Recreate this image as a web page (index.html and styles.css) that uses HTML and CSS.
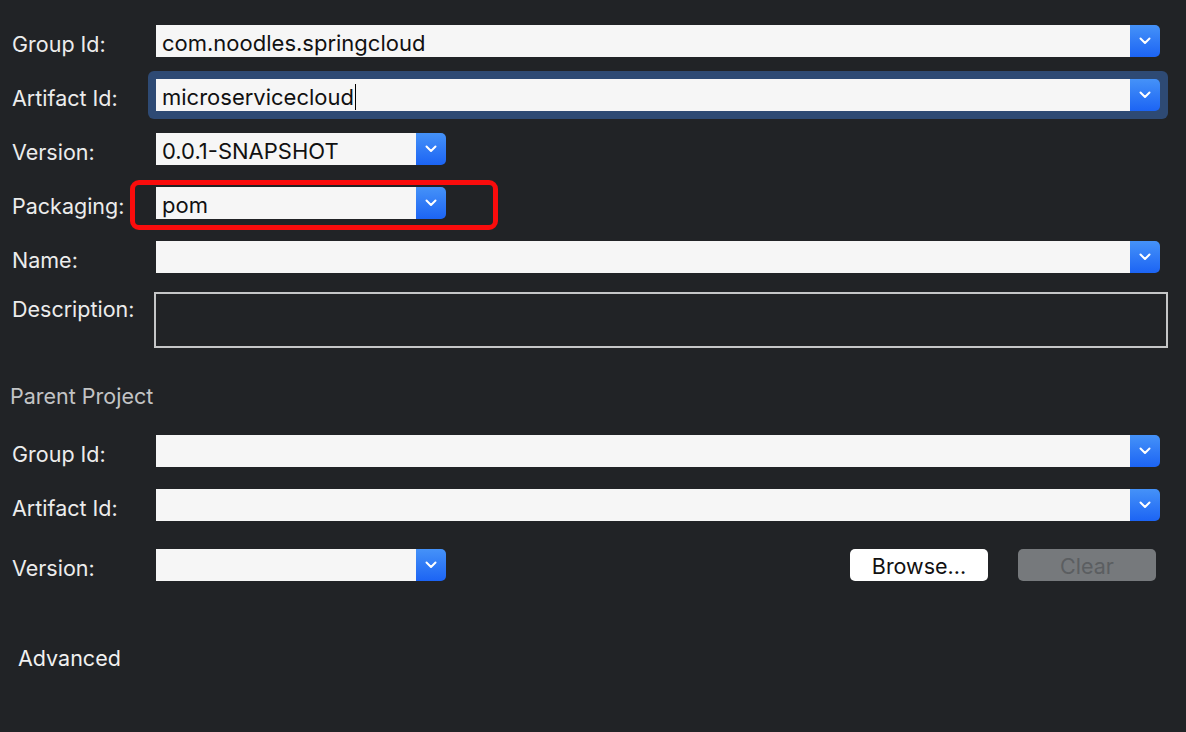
FILE: index.html
```html
<!DOCTYPE html>
<html>
<head>
<meta charset="utf-8">
<link rel="stylesheet" href="styles.css">
</head>
<body>
<div class="page">
  <div class="form">
    <div class="row">
      <label class="lbl">Group Id:</label>
      <div class="combo wide"><div class="field">com.noodles.springcloud</div><div class="arrow"><svg width="12" height="8" viewBox="0 0 12 8"><path d="M1.5 1.5 L6 6 L10.5 1.5" fill="none" stroke="#fff" stroke-width="2" stroke-linecap="round" stroke-linejoin="round"/></svg></div></div>
    </div>
    <div class="row">
      <label class="lbl">Artifact Id:</label>
      <div class="combo wide focused"><div class="field"><span class="caret">microservicecloud</span></div><div class="arrow"><svg width="12" height="8" viewBox="0 0 12 8"><path d="M1.5 1.5 L6 6 L10.5 1.5" fill="none" stroke="#fff" stroke-width="2" stroke-linecap="round" stroke-linejoin="round"/></svg></div></div>
    </div>
    <div class="row">
      <label class="lbl">Version:</label>
      <div class="combo short"><div class="field">0.0.1-SNAPSHOT</div><div class="arrow"><svg width="12" height="8" viewBox="0 0 12 8"><path d="M1.5 1.5 L6 6 L10.5 1.5" fill="none" stroke="#fff" stroke-width="2" stroke-linecap="round" stroke-linejoin="round"/></svg></div></div>
    </div>
    <div class="row marked">
      <label class="lbl">Packaging:</label>
      <div class="combo short"><div class="field">pom</div><div class="arrow"><svg width="12" height="8" viewBox="0 0 12 8"><path d="M1.5 1.5 L6 6 L10.5 1.5" fill="none" stroke="#fff" stroke-width="2" stroke-linecap="round" stroke-linejoin="round"/></svg></div></div>
      <div class="redbox"></div>
    </div>
    <div class="row">
      <label class="lbl">Name:</label>
      <div class="combo wide"><div class="field"></div><div class="arrow"><svg width="12" height="8" viewBox="0 0 12 8"><path d="M1.5 1.5 L6 6 L10.5 1.5" fill="none" stroke="#fff" stroke-width="2" stroke-linecap="round" stroke-linejoin="round"/></svg></div></div>
    </div>
    <div class="row desc-row">
      <label class="lbl desc-lbl">Description:</label>
      <div class="desc"></div>
    </div>
  </div>

  <div class="section-title">Parent Project</div>

  <div class="form parent">
    <div class="row">
      <label class="lbl">Group Id:</label>
      <div class="combo wide"><div class="field"></div><div class="arrow"><svg width="12" height="8" viewBox="0 0 12 8"><path d="M1.5 1.5 L6 6 L10.5 1.5" fill="none" stroke="#fff" stroke-width="2" stroke-linecap="round" stroke-linejoin="round"/></svg></div></div>
    </div>
    <div class="row">
      <label class="lbl">Artifact Id:</label>
      <div class="combo wide"><div class="field"></div><div class="arrow"><svg width="12" height="8" viewBox="0 0 12 8"><path d="M1.5 1.5 L6 6 L10.5 1.5" fill="none" stroke="#fff" stroke-width="2" stroke-linecap="round" stroke-linejoin="round"/></svg></div></div>
    </div>
    <div class="row last">
      <label class="lbl">Version:</label>
      <div class="combo short"><div class="field"></div><div class="arrow"><svg width="12" height="8" viewBox="0 0 12 8"><path d="M1.5 1.5 L6 6 L10.5 1.5" fill="none" stroke="#fff" stroke-width="2" stroke-linecap="round" stroke-linejoin="round"/></svg></div></div>
      <div class="buttons">
        <button class="btn browse">Browse...</button>
        <button class="btn clear" disabled>Clear</button>
      </div>
    </div>
  </div>

  <div class="advanced">Advanced</div>
</div>
</body>
</html>
```
FILE: styles.css
```css
* { box-sizing: border-box; }
html, body {
  margin: 0;
  padding: 0;
  background: #212326;
}
body {
  width: 1186px;
  height: 732px;
  overflow: hidden;
  font-family: "Inter", "Liberation Sans", sans-serif;
  color: #eeeeee;
}
.page {
  padding-top: 25px;
}
.form {
  display: flex;
  flex-direction: column;
  gap: 22px;
}
.row {
  display: flex;
  align-items: center;
  height: 32px;
  position: relative;
}
.lbl {
  width: 156px;
  padding-left: 12px;
  font-size: 21.5px;
  color: #ececec;
  padding-top: 5px;
  flex: none;
}
.combo {
  display: flex;
  height: 32px;
  position: relative;
  flex: none;
}
.combo.wide { width: 1004px; }
.combo.short { width: 290px; }
.combo.focused::before {
  content: "";
  position: absolute;
  left: -8px; right: -8px; top: -8px; bottom: -8px;
  background: #2e4a74;
  border-radius: 6px;
  z-index: 0;
}
.field {
  position: relative;
  z-index: 1;
  flex: 1;
  background: #f6f6f6;
  color: #111;
  font-size: 22px;
  padding-left: 6px;
  padding-top: 5px;
  line-height: 27px;
  white-space: nowrap;
  overflow: hidden;
}
.caret {
  border-right: 1.5px solid #000;
  padding-right: 1px;
}
.arrow {
  position: relative;
  z-index: 1;
  width: 30px;
  flex: none;
  background: linear-gradient(#4592f8, #1c64f4);
  border-radius: 0 5px 5px 0;
  display: flex;
  align-items: center;
  justify-content: center;
}
.redbox {
  position: absolute;
  left: 130px;
  top: -7px;
  width: 368px;
  height: 50px;
  border: 5px solid #fa0c0c;
  border-radius: 9px;
}
.desc-row {
  height: 56px;
  align-items: flex-start;
  margin-top: -3px;
}
.desc-lbl { padding-top: 4px; }
.desc {
  margin-left: -2px;
  width: 1014px;
  height: 56px;
  border: 2px solid #c5c6c7;
}
.section-title {
  margin-top: 36px;
  padding-left: 10px;
  font-size: 21.5px;
  color: #c3c4c5;
  height: 24px;
  line-height: 24px;
}
.parent {
  margin-top: 27px;
}
.row.last {
  margin-top: 6px;
}
.buttons {
  display: flex;
  gap: 30px;
  margin-left: 404px;
}
.btn {
  width: 138px;
  height: 32px;
  border: none;
  border-radius: 5px;
  font-family: "Inter", "Liberation Sans", sans-serif;
  font-size: 21.5px;
  padding: 2px 0 0;
}
.browse {
  background: #ffffff;
  color: #111;
}
.clear {
  background: #76797c;
  color: #5b5e61;
}
.advanced {
  margin-top: 65px;
  padding-left: 18px;
  font-size: 21.5px;
  color: #f0f0f0;
  line-height: 24px;
}
```
